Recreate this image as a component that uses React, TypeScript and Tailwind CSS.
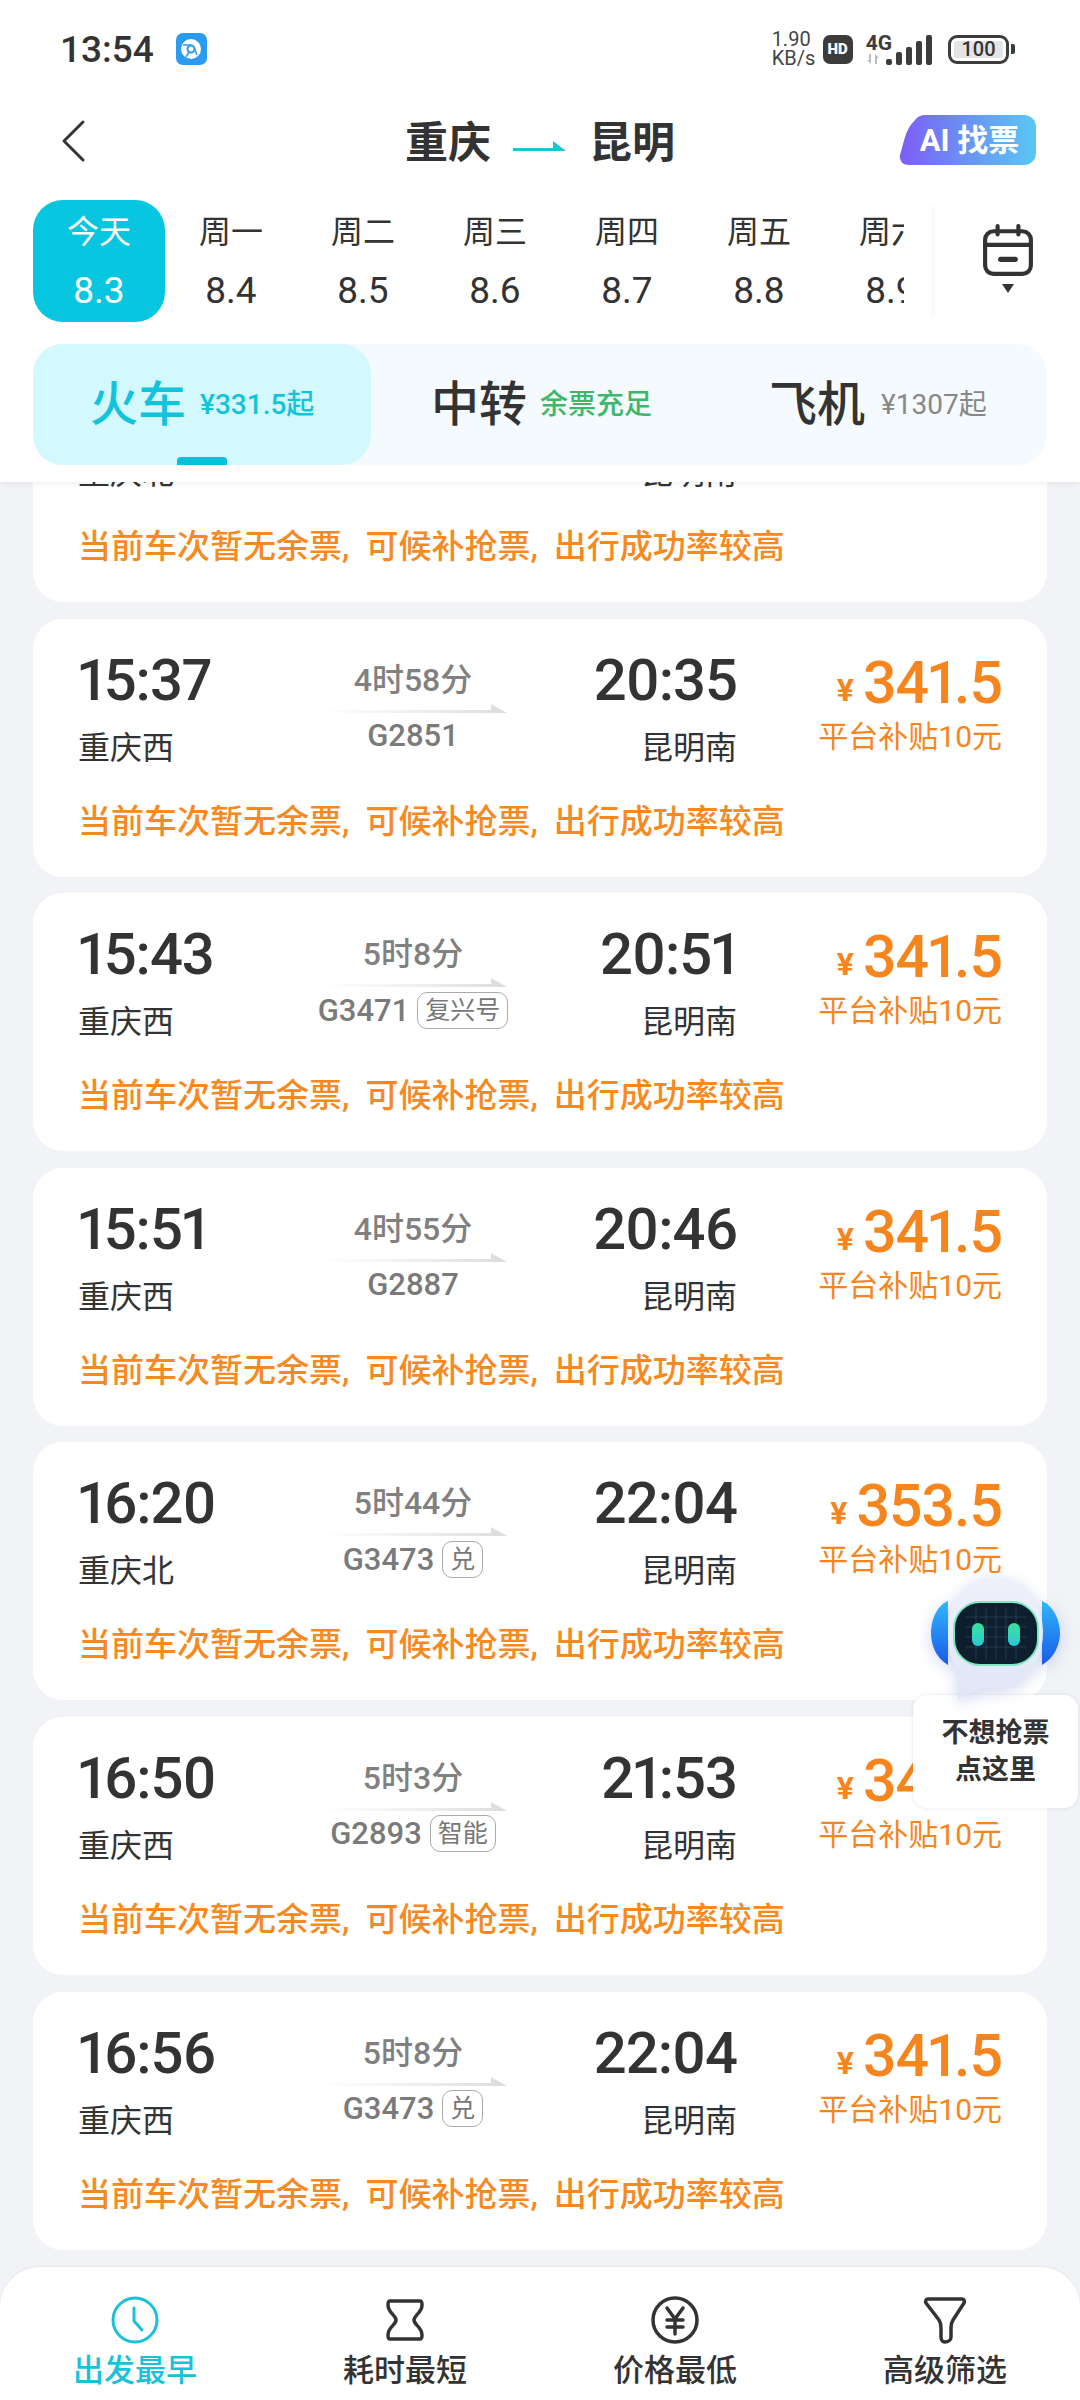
import React from 'react';

type Ticket = {
  dep: string;
  arr: string;
  from: string;
  to: string;
  dur: string;
  no: string;
  tag?: string;
  price: string;
};

const tickets: Ticket[] = [
  { dep: '', arr: '', from: '重庆北', to: '昆明南', dur: '', no: '', price: '' },
  { dep: '15:37', arr: '20:35', from: '重庆西', to: '昆明南', dur: '4时58分', no: 'G2851', price: '341.5' },
  { dep: '15:43', arr: '20:51', from: '重庆西', to: '昆明南', dur: '5时8分', no: 'G3471', tag: '复兴号', price: '341.5' },
  { dep: '15:51', arr: '20:46', from: '重庆西', to: '昆明南', dur: '4时55分', no: 'G2887', price: '341.5' },
  { dep: '16:20', arr: '22:04', from: '重庆北', to: '昆明南', dur: '5时44分', no: 'G3473', tag: '兑', price: '353.5' },
  { dep: '16:50', arr: '21:53', from: '重庆西', to: '昆明南', dur: '5时3分', no: 'G2893', tag: '智能', price: '341.5' },
  { dep: '16:56', arr: '22:04', from: '重庆西', to: '昆明南', dur: '5时8分', no: 'G3473', tag: '兑', price: '341.5' },
];

const days = [
  ['周一', '8.4'],
  ['周二', '8.5'],
  ['周三', '8.6'],
  ['周四', '8.7'],
  ['周五', '8.8'],
  ['周六', '8.9'],
];

const StatusBar = () => (
  <div className="flex h-[84px] items-center pl-[60px] pr-[65px] pt-[14px] text-[#333]">
    <span className="text-[37px] font-medium leading-none">13:54</span>
    <span className="ml-[22px] flex h-[32px] w-[31px] items-center justify-center rounded-[7px] bg-[#2a9bf0]">
      <svg width="22" height="22" viewBox="0 0 22 22" fill="none">
        <circle cx="11" cy="11" r="10" fill="#fff" />
        <circle cx="11" cy="11" r="3.5" stroke="#2a9bf0" strokeWidth="2" />
        <path d="M3 7h8M14 9l3 8M9 14l-3 5" stroke="#2a9bf0" strokeWidth="1.5" />
      </svg>
    </span>
    <div className="ml-auto flex items-center">
      <div className="flex w-[44px] flex-col text-[20px] leading-[19px] text-[#444]">
        <span>1.90</span>
        <span>KB/s</span>
      </div>
      <span className="ml-[7px] flex h-[29px] w-[30px] items-center justify-center rounded-[7px] bg-[#3c3c3c] text-[15px] font-black leading-none text-white">
        HD
      </span>
      <div className="ml-[13px] flex flex-col">
        <span className="text-[21px] font-bold leading-[19px] text-[#3c3c3c]">4G</span>
        <svg width="14" height="12" viewBox="0 0 14 12" fill="#bbb">
          <path d="M1 7h2V1h2v10zM9 11V1l4 4h-2v6z" />
        </svg>
      </div>
      <div className="-ml-[6px] flex h-[31px] items-end gap-[4px]">
        <span className="h-[6px] w-[6px] rounded-[2px] bg-[#3c3c3c]" />
        <span className="h-[13px] w-[6px] rounded-[2px] bg-[#3c3c3c]" />
        <span className="h-[18px] w-[6px] rounded-[2px] bg-[#3c3c3c]" />
        <span className="h-[24px] w-[6px] rounded-[2px] bg-[#3c3c3c]" />
        <span className="h-[30px] w-[6px] rounded-[2px] bg-[#3c3c3c]" />
      </div>
      <div className="ml-[16px] flex h-[29px] w-[61px] items-center justify-center rounded-[9px] border-[3px] border-[#3c3c3c] p-[3px]">
        <span className="flex h-full w-full items-center justify-center rounded-[2px] bg-[#e4e4e4] text-[20px] font-medium leading-none text-[#333]">
          100
        </span>
      </div>
      <span className="ml-[2px] h-[10px] w-[4px] rounded-r-[2px] bg-[#3c3c3c]" />
    </div>
  </div>
);

const Header = () => (
  <div className="relative flex h-[116px] items-center justify-center">
    <svg className="absolute left-[60px] top-[35px]" width="26" height="44" viewBox="0 0 26 44" fill="none" stroke="#333" strokeWidth="3" strokeLinecap="round" strokeLinejoin="round">
      <path d="M23 3 4 22l19 19" />
    </svg>
    <div className="flex items-center pt-[2px] text-[#333]">
      <span className="text-[43px] font-bold leading-none">重庆</span>
      <svg className="mx-[22px] mt-[6px]" width="54" height="14" viewBox="0 0 54 14">
        <path d="M0 9h40V2l13 10H0z" fill="#1cc4d9" />
      </svg>
      <span className="text-[43px] font-bold leading-none">昆明</span>
    </div>
    <div className="absolute left-[899px] top-[31px] flex h-[50px] w-[137px] items-center justify-center pl-[4px]">
      <svg className="absolute inset-0" width="137" height="50" viewBox="0 0 137 50">
        <defs>
          <linearGradient id="aiBadge" x1="0" y1="0" x2="1" y2="0">
            <stop offset="0" stopColor="#7d5ef6" />
            <stop offset="1" stopColor="#59c8f2" />
          </linearGradient>
        </defs>
        <path d="M26 0h99a12 12 0 0 1 12 12v26a12 12 0 0 1-12 12H10Q0 50 1 40l5-18Q9 12 16 5 20 0 26 0z" fill="url(#aiBadge)" />
      </svg>
      <span className="relative text-[31px] font-bold leading-none text-white">AI 找票</span>
    </div>
  </div>
);

const DateStrip = () => (
  <div className="flex h-[122px] pl-[33px]">
    <div className="flex w-[871px] overflow-hidden">
      <div className="flex w-[132px] shrink-0 flex-col items-center rounded-[30px] bg-[#08c6e0] pt-[13px] text-white">
        <span className="text-[32px] leading-[38px]">今天</span>
        <span className="mt-[20px] text-[37px] leading-[40px]">8.3</span>
      </div>
      {days.map(([week, date]) => (
        <div key={date} className="flex w-[132px] shrink-0 flex-col items-center pt-[13px] text-[#333]">
          <span className="text-[32px] leading-[38px]">{week}</span>
          <span className="mt-[20px] text-[37px] leading-[40px]">{date}</span>
        </div>
      ))}
    </div>
    <div className="ml-[31px] flex w-[145px] flex-col items-center pt-[24px] shadow-[-6px_0_8px_-6px_rgba(0,0,0,0.08)]">
      <svg width="52" height="52" viewBox="0 0 50 50" fill="none" stroke="#333" strokeWidth="4" strokeLinecap="round">
        <rect x="3" y="7" width="44" height="41" rx="8" />
        <path d="M3 20h44M15 2v8M35 2v8" />
        <path d="M18 34h14" strokeWidth="5" />
      </svg>
      <svg className="mt-[8px]" width="14" height="9" viewBox="0 0 14 9">
        <path d="M1 0h12L7 9z" fill="#333" />
      </svg>
    </div>
  </div>
);

const ModeTabs = () => (
  <div className="mx-[33px] mt-[22px] flex h-[121px] rounded-[30px] bg-[#f5fafe]">
    <div className="relative flex w-[338px] items-center rounded-[30px] bg-[#d3f9fe] pl-[57px] text-[#13c3dc]">
      <span className="text-[48px] font-medium leading-none">火车</span>
      <span className="ml-[14px] text-[28px] font-medium leading-none">¥331.5起</span>
      <span className="absolute bottom-0 left-[144px] h-[8px] w-[50px] rounded-t-[4px] bg-[#08c0dc]" />
    </div>
    <div className="flex items-center pl-[60px]">
      <span className="text-[48px] font-medium leading-none text-[#333]">中转</span>
      <span className="ml-[13px] text-[28px] font-medium leading-none text-[#3db86b]">余票充足</span>
    </div>
    <div className="flex items-center pl-[117px]">
      <span className="text-[48px] font-medium leading-none text-[#333]">飞机</span>
      <span className="ml-[16px] text-[28px] leading-none text-[#888]">¥1307起</span>
    </div>
  </div>
);

const TicketCard = ({ t }: { t: Ticket }) => (
  <div className="h-[258px] rounded-[30px] bg-white pl-[45px] pr-[45px]">
    <div className="grid h-[181px] grid-cols-[222px_226px_211px_1fr]">
      <div className="pt-[31px]">
        <div className="h-[60px] text-[58px] font-medium leading-[60px] tracking-[-1px] text-[#333] proportional-nums">{t.dep}</div>
        <div className="mt-[16px] text-[32px] leading-[44px] text-[#333]">{t.from}</div>
      </div>
      <div className="flex flex-col items-center pt-[39px]">
        <div className="h-[44px] text-[32px] font-medium leading-[44px] text-[#808080]">{t.dur}</div>
        {t.no && (
          <svg className="mt-[2px]" width="188" height="9" viewBox="0 0 188 9">
            <defs>
              <linearGradient id="routeLine" x1="0" y1="0" x2="1" y2="0">
                <stop offset="0" stopColor="#e2e2e2" stopOpacity="0" />
                <stop offset="1" stopColor="#dcdcdc" />
              </linearGradient>
            </defs>
            <path d="M0 6h172V0l16 9H0z" fill="url(#routeLine)" />
          </svg>
        )}
        <div className="mt-[4px] flex h-[38px] items-center gap-[8px]">
          <span className="text-[31px] font-medium leading-none text-[#7a7a7a]">{t.no}</span>
          {t.tag && (
            <span className="flex h-[37px] items-center rounded-[10px] border border-[#aaa] px-[7px] text-[25px] leading-none text-[#777]">
              {t.tag}
            </span>
          )}
        </div>
      </div>
      <div className="flex flex-col items-end pt-[31px]">
        <div className="h-[60px] text-[58px] font-medium leading-[60px] tracking-[-1px] text-[#333] proportional-nums">{t.arr}</div>
        <div className="mt-[16px] text-[32px] leading-[44px] text-[#333]">{t.to}</div>
      </div>
      <div className="flex flex-col items-end pt-[34px] text-[#f7851e]">
        <div className="flex h-[60px] items-end">
          {t.price && <span className="mb-[7px] mr-[9px] text-[32px] font-bold leading-none">¥</span>}
          <span className="text-[59px] font-medium leading-[60px] tracking-[-1px] proportional-nums">{t.price}</span>
        </div>
        {t.price && <div className="mt-[3px] text-[30px] leading-[42px]">平台补贴10元</div>}
      </div>
    </div>
    <div className="text-[33px] font-medium leading-[44px] text-[#f7891f]">
      当前车次暂无余票<span className="mr-[16px]">,</span>可候补抢票<span className="mr-[16px]">,</span>出行成功率较高
    </div>
  </div>
);

const RobotButton = () => (
  <div className="absolute left-[913px] top-[1577px] flex w-[165px] flex-col items-center">
    <svg className="relative z-10 -mb-[4px] drop-shadow-[0_4px_8px_rgba(120,140,210,0.35)]" width="132" height="122" viewBox="0 0 132 122">
      <defs>
        <linearGradient id="ear" x1="0" y1="0" x2="0" y2="1">
          <stop offset="0" stopColor="#2fb6fb" />
          <stop offset="1" stopColor="#1a5ae8" />
        </linearGradient>
        <linearGradient id="shell" x1="0" y1="0" x2="0" y2="1">
          <stop offset="0" stopColor="#eef1fb" />
          <stop offset="1" stopColor="#e0e6f7" />
        </linearGradient>
        <linearGradient id="eye" x1="0" y1="0" x2="0" y2="1">
          <stop offset="0" stopColor="#3ee29a" />
          <stop offset="1" stopColor="#2ac9d8" />
        </linearGradient>
      </defs>
      <path d="M18 24C6 29 1 44 1 56s5 25 17 32z" fill="url(#ear)" />
      <path d="M112 24c12 5 18 20 18 32s-6 25-18 32z" fill="url(#ear)" />
      <path d="M65 0c29 0 48 22 48 55 0 38-24 56-48 56H52l-24 11-1-29C21 83 18 72 18 55 18 22 36 0 65 0z" fill="url(#shell)" />
      <rect x="24" y="25" width="84" height="63" rx="26" fill="#0d1e2e" stroke="#7fe6c4" strokeWidth="2" />
      <path d="M36 40h61M36 50h61M36 60h61M36 70h61M46 30v52M56 30v52M66 30v52M76 30v52M86 30v52" stroke="#2c4a5c" strokeWidth="0.7" />
      <rect x="42" y="46" width="12" height="23" rx="6" fill="url(#eye)" />
      <rect x="78" y="46" width="12" height="23" rx="6" fill="url(#eye)" />
    </svg>
    <div className="flex h-[113px] w-full flex-col items-center justify-center rounded-[14px] bg-white text-[27px] font-bold leading-[37px] text-[#333] shadow-[0_0_4px_rgba(0,0,0,0.1)]">
      <span>不想抢票</span>
      <span>点这里</span>
    </div>
  </div>
);

const BottomBar = () => (
  <div className="absolute bottom-0 left-0 grid h-[133px] w-full grid-cols-4 rounded-t-[40px] bg-white pt-[29px] shadow-[0_-1px_2px_rgba(0,0,0,0.06)]">
    <div className="flex flex-col items-center text-[#19c2da]">
      <svg width="48" height="48" viewBox="0 0 48 48" fill="none" stroke="currentColor" strokeWidth="3" strokeLinecap="round" strokeLinejoin="round">
        <circle cx="24" cy="24" r="22" />
        <path d="M23 12v13l8 9" />
      </svg>
      <span className="mt-[7px] text-[31px] font-medium leading-[40px]">出发最早</span>
    </div>
    <div className="flex flex-col items-center text-[#333]">
      <svg width="48" height="48" viewBox="0 0 48 48" fill="none" stroke="currentColor" strokeWidth="3.5" strokeLinejoin="round">
        <path d="M9 5h30c2 0 2 2 2 4 0 8-8 10-8 15s8 7 8 15c0 2 0 4-2 4H9c-2 0-2-2-2-4 0-8 8-10 8-15S7 17 7 9c0-2 0-4 2-4z" />
      </svg>
      <span className="mt-[7px] text-[31px] font-medium leading-[40px]">耗时最短</span>
    </div>
    <div className="flex flex-col items-center text-[#333]">
      <svg width="48" height="48" viewBox="0 0 48 48" fill="none" stroke="currentColor" strokeWidth="3.5" strokeLinecap="round" strokeLinejoin="round">
        <circle cx="24" cy="24" r="22" />
        <path d="M16 12l8 11 8-11M16 24h16M16 31h16M24 23v15" />
      </svg>
      <span className="mt-[7px] text-[31px] font-medium leading-[40px]">价格最低</span>
    </div>
    <div className="flex flex-col items-center text-[#333]">
      <svg width="48" height="48" viewBox="0 0 48 48" fill="none" stroke="currentColor" strokeWidth="3.5" strokeLinejoin="round">
        <path d="M7 3h34c2 0 3 2 2 4L32 24c-2 3-2 5-2 8v9c0 3-3 5-6 5s-4-3-4-5v-9c0-3 0-5-2-8L5 7C4 5 5 3 7 3z" />
      </svg>
      <span className="mt-[7px] text-[31px] font-medium leading-[40px]">高级筛选</span>
    </div>
  </div>
);

export default function App() {
  return (
    <div className="relative h-[2400px] w-[1080px] overflow-hidden bg-[#f1f3f6] font-[Roboto,'Noto_Sans_CJK_SC',sans-serif]">
      <div className="relative z-10 h-[482px] bg-white shadow-[0_2px_6px_rgba(0,0,0,0.06)]">
        <StatusBar />
        <Header />
        <DateStrip />
        <ModeTabs />
      </div>
      <div className="-mt-[138px] flex flex-col gap-[16.6px] px-[33px]">
        {tickets.map((t, i) => (
          <TicketCard key={i} t={t} />
        ))}
      </div>
      <RobotButton />
      <BottomBar />
    </div>
  );
}
